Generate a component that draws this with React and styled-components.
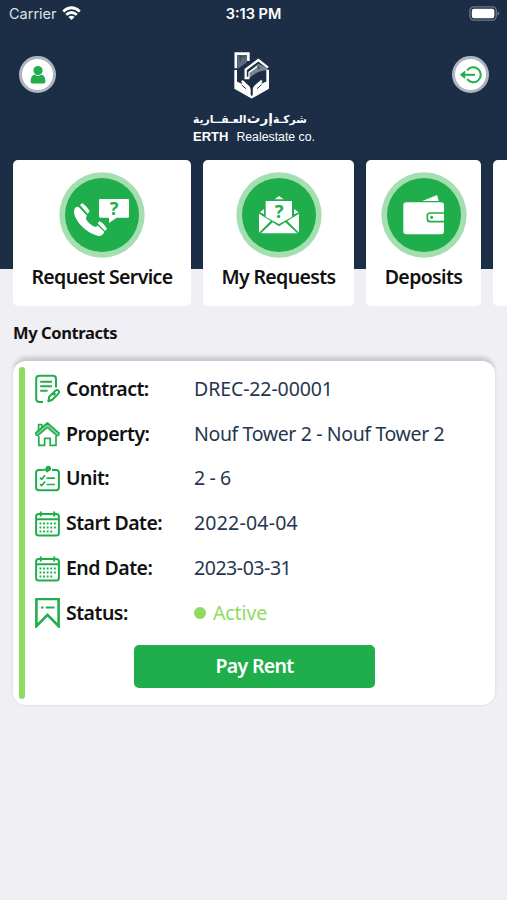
import React from 'react';
import styled, { createGlobalStyle } from 'styled-components';

const GREEN = '#20ae4c';

const contract = [
  { label: 'Contract:', value: 'DREC-22-00001', icon: 'contract', spacing: -0.1 },
  { label: 'Property:', value: 'Nouf Tower 2 - Nouf Tower 2', icon: 'home', spacing: -0.37 },
  { label: 'Unit:', value: '2 - 6', icon: 'unit', spacing: -0.4 },
  { label: 'Start Date:', value: '2022-04-04', icon: 'calendar', spacing: 0.22 },
  { label: 'End Date:', value: '2023-03-31', icon: 'calendar', spacing: -0.45 },
  { label: 'Status:', value: 'Active', icon: 'bookmark', spacing: -0.1, active: true },
];

const App = () => {
  return (
    <>
      <GlobalStyle />
      <Header>
        <StatusBar>
          <Carrier>
            Carrier
            <WifiIcon />
          </Carrier>
          <Time>3:13 PM</Time>
          <BatteryIcon />
        </StatusBar>
        <TopBar>
          <RoundButton aria-label="Profile">
            <svg width="16" height="20" viewBox="0 0 16 20">
              <circle cx="8" cy="5.6" r="4.6" fill={GREEN} />
              <path d="M4.3 9.6Q8 12.4 11.7 9.6Q15.4 11 15.4 16.4Q15.4 18.6 13.4 18.6H2.6Q.6 18.6.6 16.4Q.6 11 4.3 9.6Z" fill={GREEN} />
            </svg>
          </RoundButton>
          <Brand>
            <Logo />
            <BrandArabic>شركـة <b>إرث</b> العـقــارية</BrandArabic>
            <BrandName><b>ERTH</b><span>Realestate co.</span></BrandName>
          </Brand>
          <RoundButton aria-label="Logout">
            <svg width="24" height="20" viewBox="0 0 24 20" fill="none" stroke={GREEN} strokeWidth="2">
              <path d="M8.2 5.4A7.5 7.5 0 1 1 8.2 14.2" />
              <path d="M3.5 9.8H16" />
              <path d="M6.2 5.6L.8 9.8L6.2 14Z" fill={GREEN} stroke="none" />
            </svg>
          </RoundButton>
        </TopBar>
      </Header>
      <Services>
        <ServiceCard $width={178}>
          <RequestIcon />
          <ServiceName>Request Service</ServiceName>
        </ServiceCard>
        <ServiceCard $width={151}>
          <MailIcon />
          <ServiceName>My Requests</ServiceName>
        </ServiceCard>
        <ServiceCard $width={115}>
          <WalletIcon />
          <ServiceName>Deposits</ServiceName>
        </ServiceCard>
        <ServiceCard $width={115} />
      </Services>
      <Title>My Contracts</Title>
      <ContractCard>
        <Accent />
        <Details>
          {contract.map((item) => {
            return (
              <Row key={item.label}>
                <RowIcon name={item.icon} />
                <Label>{item.label}</Label>
                <Value $active={item.active} $spacing={item.spacing}>
                  {item.active && <Dot />}
                  {item.value}
                </Value>
              </Row>
            );
          })}
          <PayButton>Pay Rent</PayButton>
        </Details>
      </ContractCard>
    </>
  );
};

const WifiIcon = () => (
  <svg width="19" height="15" viewBox="0 0 19 15" fill="none" stroke="#fff" strokeWidth="2.7">
    <path d="M1.2 5.5Q9.5-2 17.8 5.5" />
    <path d="M4.2 8.8Q9.5 4.2 14.8 8.8" />
    <path d="M9.5 14L6.4 10.9Q9.5 8.4 12.6 10.9Z" fill="#fff" stroke="none" />
  </svg>
);

const BatteryIcon = () => (
  <svg width="31" height="15" viewBox="0 0 31 15">
    <rect x=".9" y=".9" width="26.4" height="13.2" rx="4" fill="none" stroke="#6d7988" strokeWidth="1.3" />
    <rect x="2.8" y="2.8" width="22.6" height="9.4" rx="2.2" fill="#fff" />
    <path d="M28.6 5.2Q30.4 6 30.4 7.5Q30.4 9 28.6 9.8Z" fill="#6d7988" />
  </svg>
);

const Logo = () => (
  <LogoSvg viewBox="150 15 114 150">
    <path d="M164 31H192V52L164 72Z" fill="#5d6b7d" stroke="none" />
    <path d="M168 36H188M172 31V50" stroke="#22344b" strokeWidth="2" />
    <path d="M200 78L226 56L252 70V76Q226 76 200 98Z" fill="#7c8796" stroke="none" />
    <path d="M220 68H234M227 62V76" stroke="#2c3e55" strokeWidth="2" />
    <path d="M158.5 70V26H196V48" strokeWidth="8" />
    <path d="M199 99H188V74L226 45L255 68" strokeWidth="7" />
    <path d="M198 99V82L222 65" strokeWidth="4" />
    <path d="M158 75V129L206 156L254 129V74" strokeWidth="8" />
    <path d="M158 108L178 117Q171 106 180 106L199 124Q203 129 203 135V158L158 131Z" fill="#fff" stroke="none" />
    <path d="M254 108L235 116Q242 104 233 106L214 122Q209 128 209 135V158L254 131Z" fill="#fff" stroke="none" />
    <path d="M176 120L189 131M236 119L222 131" stroke="#1b2e46" strokeWidth="3" />
    <path d="M206 128V152" stroke="#1b2e46" strokeWidth="4" />
  </LogoSvg>
);

const Badge = ({ children }) => (
  <svg width="86" height="86" viewBox="0 0 258 258">
    <circle cx="129" cy="129" r="128" fill="#a5dfb1" />
    <circle cx="129" cy="129" r="111" fill={GREEN} />
    {children}
  </svg>
);

const RequestIcon = () => (
  <Badge>
    <path d="M48 108Q56 101 62 108L84 131Q79 136 82 143Q93 160 110 165L117 161L136 180Q130 193 118 192Q86 184 62 156Q40 128 46 112Z" fill="#fff" />
    <path d="M63 99L70 93Q84 103 92 118L86 125Z" fill="#fff" />
    <path d="M116 154L122 147Q136 155 144 170L138 177Z" fill="#fff" />
    <path d="M124 81H207Q210 81 210 84V134Q210 137 207 137H173L150 153V137H124Q120 137 120 133V85Q120 81 124 81Z" fill="#fff" />
    <Question x="165" y="128" $size={54}>?</Question>
  </Badge>
);

const MailIcon = () => (
  <Badge>
    <path d="M116 82L129 72L143 82Z" fill="#fff" />
    <path d="M89 87H168V135L129 156L89 135Z" fill="#fff" />
    <path d="M72 121L84 111V127ZM174 111L188 121L174 127Z" fill="#fff" />
    <path d="M69 125L104 147L69 182ZM189 125L154 147L189 182Z" fill="#fff" />
    <path d="M75 184L110 151L129 163L148 151L184 184Z" fill="#fff" />
    <Question x="129" y="139" $size={55}>?</Question>
  </Badge>
);

const WalletIcon = () => (
  <Badge>
    <path d="M124 87L168 69Q172 80 173 87Z" fill="#fff" />
    <rect x="67" y="91" width="122" height="96" rx="9" fill="#fff" />
    <path d="M190 123H147Q139 123 139 131V141Q139 149 147 149H190" fill="none" stroke={GREEN} strokeWidth="5" />
    <circle cx="152" cy="136" r="4.5" fill={GREEN} />
  </Badge>
);

const RowIcon = ({ name }) => {
  if (name === 'contract') {
    return (
      <LineIcon viewBox="0 0 25 30">
        <path d="M8 28H4.5Q1.2 28 1.2 24.8V5Q1.2 1.8 4.5 1.8H17.7Q21 1.8 21 5V13.4" />
        <path d="M5.2 7.8H17M5.2 12.3H17M5.2 16.8H12.5" />
        <path d="M13.4 27.3L14.2 22.8L20.4 16.7Q22.3 15.3 23.6 16.8Q24.6 18.4 23.2 19.9L17.3 25.8ZM18.3 21.3L20.5 19.1" />
      </LineIcon>
    );
  }
  if (name === 'home') {
    return (
      <LineIcon viewBox="0 0 25 30" $stroke={1.7}>
        <path d="M1.2 16L.9 14L12.4 4L24 14.2L23.3 16.4L21.7 16.4L12.4 8.4L2.8 16.4Z" />
        <path d="M3.6 12V5.5H6.8V8.8M3.8 17V26.4H9.6V19.4H15.2V26.4H21V17" />
        <path d="M2.4 14.8L12.4 6.2L22.4 14.8" strokeOpacity=".6" />
      </LineIcon>
    );
  }
  if (name === 'unit') {
    return (
      <LineIcon viewBox="0 0 25 30">
        <path d="M8 6H3.8Q1.1 6 1.1 8.8V23.4Q1.1 26.2 3.8 26.2H21.2Q23.9 26.2 23.9 23.4V8.8Q23.9 6 21.2 6H17" />
        <path d="M8.2 5.8H12M11.5 8.2L15 4.2" />
        <circle cx="13.3" cy="4.5" r="1.7" fill={GREEN} />
        <path d="M5 13.7L6.7 15.3L10 11.2M11.6 14.2H20M5 20.1L6.7 21.7L10 17.6M11.6 20.5H20" strokeWidth="1.7" />
      </LineIcon>
    );
  }
  if (name === 'calendar') {
    return (
      <LineIcon viewBox="0 0 25 30">
        <rect x="1.1" y="5" width="22.8" height="21.6" rx="2.6" />
        <path d="M1 10.3H24M5.8 2.4V7.4M19.2 2.4V7.4" />
        <path d="M4.5 14.5H21.5M4.5 18.5H21.5M4.5 22.5H18" strokeWidth="1.9" strokeDasharray="1.9 1.7" />
      </LineIcon>
    );
  }
  return (
    <LineIcon viewBox="0 0 25 30" $stroke={2.6}>
      <path d="M1.4 .9H23.6V28.2L12.5 16.8L1.4 28.2Z" strokeLinejoin="miter" />
      <path d="M6 9.5H8.5M10.8 9.5H19.5" strokeWidth="2.1" />
    </LineIcon>
  );
};

const GlobalStyle = createGlobalStyle`
  * {
    box-sizing: border-box;
  }
  body {
    margin: 0;
    min-height: 900px;
    overflow: hidden;
    background: #f0eff4;
    color: #111;
    font-family: "Noto Sans", "Open Sans", sans-serif;
  }
  svg {
    display: block;
    flex-shrink: 0;
  }
`;

const Header = styled.header`
  height: 269px;
  background: #1b2e46;
  color: #fff;
`;

const StatusBar = styled.div`
  display: grid;
  grid-template-columns: 1fr auto 1fr;
  align-items: center;
  height: 27px;
  padding: 0 7px 0 9px;
  font-family: Inter, sans-serif;
  font-size: 14.5px;

  & > svg {
    justify-self: end;
  }
`;

const Carrier = styled.div`
  display: flex;
  align-items: center;
  gap: 5px;
  color: #dce1e7;
`;

const Time = styled.div`
  margin-right: 2px;
  font-weight: 600;
`;

const TopBar = styled.div`
  display: flex;
  justify-content: space-between;
  align-items: flex-start;
  padding: 23px 18px 0 19px;
`;

const RoundButton = styled.button`
  display: flex;
  align-items: center;
  justify-content: center;
  width: 37px;
  height: 37px;
  margin-top: 6px;
  padding: 0;
  border: 3px solid #aeb5c2;
  border-radius: 50%;
  background: #fff;
`;

const Brand = styled.div`
  display: flex;
  flex-direction: column;
  align-items: center;
  width: 122px;
`;

const LogoSvg = styled.svg`
  width: 38px;
  height: 50px;
  margin-right: 4px;
  fill: none;
  stroke: #fff;
`;

const BrandArabic = styled.div`
  height: 24px;
  margin-top: 6px;
  align-self: flex-start;
  direction: rtl;
  font-family: "DejaVu Sans", sans-serif;
  font-size: 10.8px;
  font-weight: bold;
  line-height: 24px;
  white-space: nowrap;
  word-spacing: -3.5px;

  b {
    font-size: 13.5px;
  }
`;

const BrandName = styled.div`
  display: flex;
  align-items: baseline;
  justify-content: space-between;
  width: 100%;
  font-family: "Liberation Sans", sans-serif;
  font-size: 12.3px;
  line-height: 14px;
  white-space: nowrap;

  b {
    font-size: 13px;
  }
`;

const Services = styled.div`
  display: flex;
  gap: 12px;
  margin-top: -109px;
  padding-left: 13px;
  overflow: hidden;
`;

const ServiceCard = styled.div`
  display: flex;
  flex-direction: column;
  align-items: center;
  flex: 0 0 ${(props) => props.$width}px;
  height: 146px;
  padding-top: 12px;
  border-radius: 5px;
  background: #fff;
`;

const ServiceName = styled.div`
  margin-top: 5px;
  font-size: 19.5px;
  font-weight: 600;
  letter-spacing: -0.63px;
  line-height: 28px;
  white-space: nowrap;
`;

const Question = styled.text`
  fill: ${GREEN};
  font-family: "Noto Sans", sans-serif;
  font-size: ${(props) => props.$size}px;
  font-weight: bold;
  text-anchor: middle;
`;

const Title = styled.h2`
  margin: 15px 13px 16px;
  font-size: 16.5px;
  font-weight: 700;
  letter-spacing: -0.4px;
  line-height: 24px;
`;

const ContractCard = styled.section`
  display: flex;
  height: 344px;
  margin: 0 12px 0 13px;
  padding: 6px;
  border-radius: 13px;
  background: #fff;
  box-shadow: 0 -5px 4px -1px #c9c9cb, 0 1px 2px #e2e1e6;
`;

const Accent = styled.div`
  width: 6px;
  border-radius: 3px;
  background: #8edb5f;
`;

const Details = styled.div`
  flex: 1;
  padding-left: 10px;
`;

const Row = styled.div`
  display: grid;
  grid-template-columns: 31px 128px 1fr;
  align-items: center;
  height: 44.8px;
  white-space: nowrap;
`;

const LineIcon = styled.svg`
  width: 25px;
  height: 30px;
  fill: none;
  stroke: ${GREEN};
  stroke-width: ${(props) => props.$stroke || 2};
  stroke-linejoin: round;
`;

const Label = styled.div`
  padding-bottom: 2px;
  font-size: 19.5px;
  font-weight: 600;
  letter-spacing: -0.52px;
`;

const Value = styled.div`
  display: flex;
  align-items: center;
  padding-bottom: 2px;
  color: ${(props) => (props.$active ? '#8edb5f' : '#26364f')};
  font-size: 19.5px;
  letter-spacing: ${(props) => props.$spacing}px;
`;

const Dot = styled.span`
  width: 12px;
  height: 12px;
  margin: 2px 7px 0 0;
  border-radius: 50%;
  background: #8edb5f;
`;

const PayButton = styled.button`
  display: block;
  width: 241px;
  height: 43px;
  margin: 9.5px 0 0 99px;
  padding: 0 0 2px;
  border: 0;
  border-radius: 5px;
  background: ${GREEN};
  color: #fff;
  font: inherit;
  font-size: 19.5px;
  font-weight: 600;
  letter-spacing: -0.7px;
`;

export default App;
